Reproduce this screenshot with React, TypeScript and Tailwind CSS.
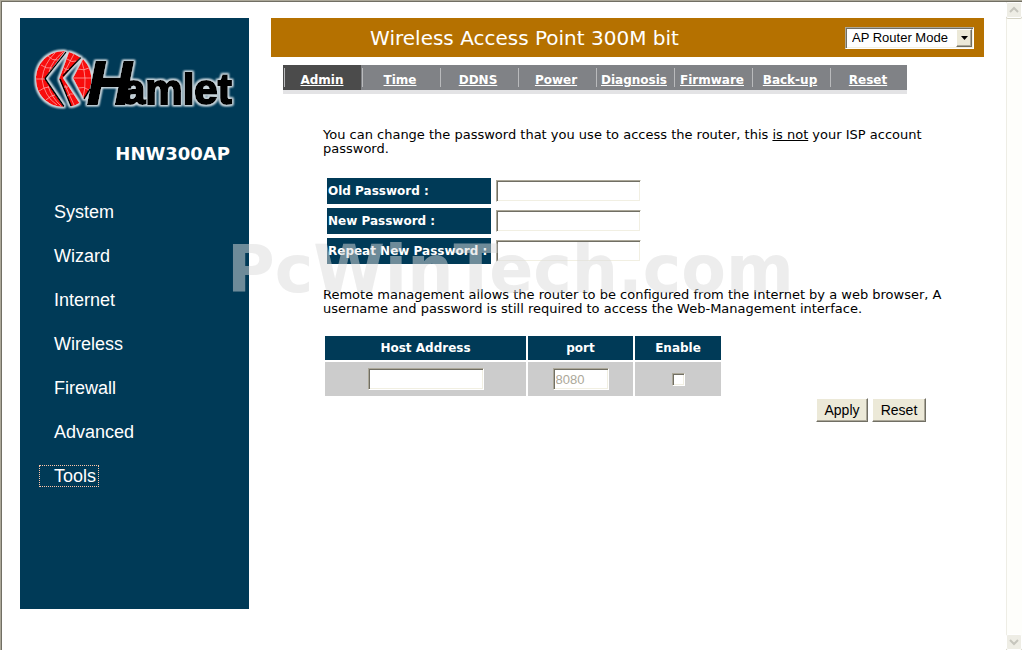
import { useState } from 'react';
import { clsx } from 'clsx';

const MENU = ['System', 'Wizard', 'Internet', 'Wireless', 'Firewall', 'Advanced', 'Tools'];
const TABS = ['Admin', 'Time', 'DDNS', 'Power', 'Diagnosis', 'Firmware', 'Back-up', 'Reset'];
const PASSWORDS = [
  { id: 'old', label: 'Old Password :' },
  { id: 'new', label: 'New Password :' },
  { id: 'repeat', label: 'Repeat New Password :' },
];

const sunken =
  'bg-white border border-t-[#aca899] border-l-[#aca899] border-r-white border-b-white shadow-[inset_1px_1px_0_#716f64,inset_-1px_-1px_0_#f1efe2] outline-none';
const raised =
  'border border-t-white border-l-white border-r-[#716f64] border-b-[#716f64] bg-[#ece9d8] shadow-[inset_-1px_-1px_0_#aca899]';
const arial = "font-['Liberation_Sans',Arial,sans-serif]";

function Logo() {
  return (
    <svg viewBox="0 0 210 72" className="block h-[72px] w-[210px] overflow-visible" role="img" aria-label="Hamlet">
      <defs>
        <filter id="glow" x="-10%" y="-20%" width="120%" height="140%">
          <feMorphology in="SourceAlpha" operator="dilate" radius="1" result="fat" />
          <feGaussianBlur in="fat" stdDeviation="1.2" result="soft" />
          <feFlood floodColor="#cfdae0" />
          <feComposite in2="soft" operator="in" result="halo" />
          <feMerge>
            <feMergeNode in="halo" />
            <feMergeNode in="halo" />
            <feMergeNode in="SourceGraphic" />
          </feMerge>
        </filter>
      </defs>
      <g filter="url(#glow)">
        {/* globe cut by two chevrons */}
        <path d="M32 6 C14 6 3 19 3 34 C3 50 15 62 31 62 L12 33.5Z" fill="#f80c0c" />
        <path d="M36 7 Q43 9 47.5 12.5 L30 33 L46.5 58 Q42 61 38 61.5 L26 34 L28 29Z" fill="#f80c0c" />
        <path d="M50 14 C61 25 61 43 51 54 L40 33Z" fill="#f80c0c" />
        <g fill="none" stroke="#000" strokeWidth="1.6">
          <path d="M33 7 L12 33.5 L31 61.5" />
          <path d="M48 12.5 L30 31" />
          <path d="M38 61 L27 34" />
          <path d="M51 54 L57 44" />
        </g>
        <g fill="none" stroke="#ffb4b4" strokeWidth="0.7">
          <path d="M8 20 Q13 24 19 23 M3 34 H12 M6 46 Q11 42 16 42 M13 55 Q18 50 22 50 M15 11 Q19 16 25 15" />
          <path d="M22 8 Q11 18 9 34 Q11 51 24 60 M30 7 Q19 16 16 27 M15 41 Q19 53 28 61" />
          <path d="M34 14 Q39 18 43 16 M31 23 Q34 26 36 24 M31 42 H35 M34 51 Q38 48 40 49 M41 9 L31 28 M32 40 L41 60" />
          <path d="M40 33 H58 M45 24 Q51 26 56 23 M45 43 Q51 41 56 45 M48 14 Q55 33 50 53" />
        </g>
        <text
          x="54"
          y="59"
          stroke="#000"
          strokeWidth="2"
          className="font-['Liberation_Sans',Arial,sans-serif] text-[62px] leading-[62px] font-bold italic"
        >
          H
        </text>
        <text
          x="89"
          y="59"
          stroke="#000"
          strokeWidth="2"
          className="font-['Liberation_Sans',Arial,sans-serif] text-[42px] leading-[42px] font-bold"
        >
          amlet
        </text>
      </g>
    </svg>
  );
}

function ScrollButton({ down = false }: { down?: boolean }) {
  return (
    <button
      type="button"
      aria-label={down ? 'Scroll down' : 'Scroll up'}
      className="flex h-4 w-4 items-center justify-center rounded-xs border border-white bg-[#eeede5] shadow-[0_1px_0_#d5d3c4]"
    >
      <svg viewBox="0 0 10 10" className="h-[10px] w-[10px]" fill="none" stroke="#c6c5bd" strokeWidth="2">
        <path d={down ? 'M1 3 L5 7 L9 3' : 'M1 7 L5 3 L9 7'} />
      </svg>
    </button>
  );
}

export default function App() {
  const [remote, setRemote] = useState(false);

  return (
    <div className="min-h-screen border-t border-l border-[#aca899] bg-white font-['DejaVu_Sans',Verdana,sans-serif] text-[12px] leading-[14px] text-black">
      <div className="flex min-h-[calc(100vh-1px)] border-t border-l border-[#716f64]">
        <div className="flex min-w-0 flex-1 gap-[22px] pt-4 pr-[22px] pb-[41px] pl-[18px]">
          {/* Left menu */}
          <aside className="w-[229px] shrink-0 bg-[#003a57] text-white">
            <div className="pt-[27px] pl-[13px]">
              <Logo />
            </div>
            <h1 className="pt-[27px] pr-[19px] text-right text-[18px] leading-[20px] font-bold">HNW300AP</h1>
            <nav className={clsx('mt-[37px] ml-[19px] flex flex-col items-start gap-[22px] text-[18px] leading-[22px]', arial)}>
              {MENU.map((item) => (
                <a
                  key={item}
                  href="#"
                  className={clsx('pr-[3px] pl-[15px]', item === 'Tools' && 'outline-1 -outline-offset-1 outline-dotted outline-[#ffc5a8]')}
                >
                  {item}
                </a>
              ))}
            </nav>
          </aside>

          <main className="min-w-0 flex-1">
            {/* Title bar */}
            <header className="flex h-[39px] items-center bg-[#b57100] pr-[10px]">
              <h2 className="flex-1 text-center text-[20px] leading-[24px] text-white">Wireless Access Point 300M bit</h2>
              <div className="flex w-[196px] justify-end">
                <div className="relative">
                  <select
                    aria-label="Operation mode"
                    className={clsx('block h-[22px] w-[129px] appearance-none pl-[6px] text-[13px] leading-[20px]', sunken, arial)}
                  >
                    <option>AP Router Mode</option>
                  </select>
                  <span className={clsx('pointer-events-none absolute top-[2px] right-[2px] flex h-[18px] w-4 items-center justify-center', raised)}>
                    <svg viewBox="0 0 7 4" className="h-[4px] w-[7px]">
                      <path d="M0 0H7L3.5 4Z" />
                    </svg>
                  </span>
                </div>
              </div>
            </header>

            {/* Tabs */}
            <nav className="mt-2 ml-3 grid w-[624px] grid-cols-8 border-b-4 border-[#e3e3e5] bg-[#808286] bg-clip-padding text-center font-bold text-white">
              {TABS.map((tab, i) => (
                <div key={tab} className={clsx('flex h-[25px] pl-px', i === 0 && 'bg-[#4b4b4b]')}>
                  <span className="my-[3px] w-px bg-[#b9babc]" />
                  <a href="#" className="flex-1 pt-[8px] pr-[2px] underline">
                    {tab}
                  </a>
                </div>
              ))}
            </nav>

            <form className="relative mt-[34px] ml-[52px] max-w-[625px]" onSubmit={(e) => e.preventDefault()}>
              <p className="text-[13px]">
                You can change the password that you use to access the router, this <u>is not</u> your ISP account
                password.
              </p>

              <div className="mt-[22px] flex flex-col gap-1 pl-1">
                {PASSWORDS.map(({ id, label }) => (
                  <div key={id} className="flex items-start gap-[5px]">
                    <label htmlFor={id} className="w-[164px] bg-[#003a57] py-[6px] pl-px font-bold whitespace-nowrap text-white">
                      {label}
                    </label>
                    <input id={id} type="password" className={clsx('mt-[2px] h-[22px] w-[145px]', sunken)} />
                  </div>
                ))}
              </div>

              <p className="mt-6 text-[13px]">
                Remote management allows the router to be configured from the Internet by a web browser, A username and
                password is still required to access the Web-Management interface.
              </p>

              <table className="mt-[18px] border-separate border-spacing-[2px] text-center">
                <thead>
                  <tr className="h-6 bg-[#003a57] text-white">
                    <th className="w-[201px]">Host Address</th>
                    <th className="w-[105px]">port</th>
                    <th className="w-[86px]">Enable</th>
                  </tr>
                </thead>
                <tbody>
                  <tr className="h-[34px] bg-[#cccccc]">
                    <td>
                      <input aria-label="Host address" className={clsx('mx-auto block h-[22px] w-[116px] px-[2px]', sunken)} />
                    </td>
                    <td>
                      <input
                        aria-label="Port"
                        disabled
                        defaultValue="8080"
                        className={clsx('mx-auto block h-[22px] w-14 px-[2px] text-[13px] text-[#aca899]', sunken, arial)}
                      />
                    </td>
                    <td>
                      <input
                        type="checkbox"
                        aria-label="Enable"
                        checked={remote}
                        onChange={(e) => setRemote(e.target.checked)}
                        className={clsx('mx-auto block h-[13px] w-[13px] appearance-none checked:bg-[#716f64]', sunken)}
                      />
                    </td>
                  </tr>
                </tbody>
              </table>

              <div className={clsx('flex justify-end gap-1 pr-[22px] text-[14px] leading-[16px]', arial)}>
                <button type="submit" className={clsx('h-6 w-[52px]', raised)}>
                  Apply
                </button>
                <button type="reset" className={clsx('h-6 w-[54px]', raised)}>
                  Reset
                </button>
              </div>

              {/* Watermark */}
              <div className="pointer-events-none absolute top-[110px] -left-[96px] text-[65px] leading-[64px] font-bold whitespace-nowrap text-[#dbdbdb]/50">
                PcWinTech.com
              </div>
            </form>
          </main>
        </div>

        {/* Window scroll bar */}
        <div className="sticky top-0 flex h-[calc(100vh-2px)] w-4 shrink-0 flex-col justify-between bg-[#fefefb] shadow-[inset_1px_0_0_#eeede5]">
          <ScrollButton />
          <ScrollButton down />
        </div>
      </div>
    </div>
  );
}
